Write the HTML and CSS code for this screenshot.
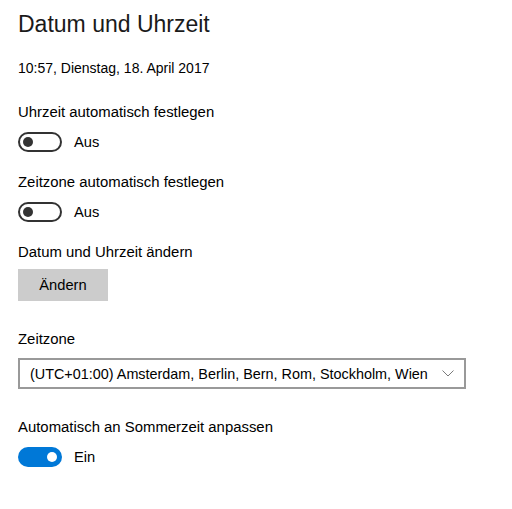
FILE: index.html
```html
<!DOCTYPE html>
<html lang="de">
<head>
<meta charset="utf-8">
<title>Datum und Uhrzeit</title>
<link rel="stylesheet" href="styles.css">
</head>
<body>
<main class="page">
  <h1 class="title">Datum und Uhrzeit</h1>
  <p class="now">10:57, Dienstag, 18. April 2017</p>

  <p class="label l-first">Uhrzeit automatisch festlegen</p>
  <div class="toggle-row">
    <span class="toggle off"><span class="knob"></span></span>
    <span class="state">Aus</span>
  </div>

  <p class="label l-next">Zeitzone automatisch festlegen</p>
  <div class="toggle-row">
    <span class="toggle off"><span class="knob"></span></span>
    <span class="state">Aus</span>
  </div>

  <p class="label l-next">Datum und Uhrzeit ändern</p>
  <button class="btn" type="button">Ändern</button>

  <p class="label l-section">Zeitzone</p>
  <div class="select">
    <span class="select-text">(UTC+01:00) Amsterdam, Berlin, Bern, Rom, Stockholm, Wien</span>
    <svg class="chev" width="12" height="7" viewBox="0 0 12 7"><polyline points="0.5,0.5 6,6 11.5,0.5" fill="none" stroke="#7a7a7a" stroke-width="1"/></svg>
  </div>

  <p class="label l-section2">Automatisch an Sommerzeit anpassen</p>
  <div class="toggle-row">
    <span class="toggle on"><span class="knob"></span></span>
    <span class="state">Ein</span>
  </div>
</main>
</body>
</html>
```
FILE: styles.css
```css
html, body {
  margin: 0;
  padding: 0;
  background: #ffffff;
}
body {
  font-family: "Liberation Sans", Arial, sans-serif;
  color: #000000;
}
.page {
  display: flex;
  flex-direction: column;
  align-items: flex-start;
  padding: 8px 0 0 18px;
}
.title {
  margin: 0;
  font-size: 23px;
  font-weight: normal;
  line-height: 32px;
  color: #1a1a1a;
}
.now {
  margin: 18px 0 0;
  font-size: 14px;
  line-height: 20px;
}
.label {
  margin: 0;
  font-size: 14.9px;
  line-height: 20px;
}
.l-first { margin-top: 24px; }
.l-next { margin-top: 20px; }
.l-section { margin-top: 28px; }
.l-section2 { margin-top: 28px; }
.toggle-row {
  display: flex;
  align-items: center;
  gap: 12px;
  margin-top: 10px;
  height: 20px;
}
.state {
  font-size: 14.7px;
  line-height: 20px;
}
.toggle {
  box-sizing: border-box;
  width: 44px;
  height: 20px;
  border-radius: 10px;
  display: flex;
  align-items: center;
  padding: 0 3px;
}
.toggle .knob {
  width: 10px;
  height: 10px;
  border-radius: 50%;
}
.toggle.off {
  border: 2px solid #333333;
  justify-content: flex-start;
}
.toggle.off .knob { background: #333333; }
.toggle.on {
  background: #0078d7;
  justify-content: flex-end;
  padding: 0 5px;
}
.toggle.on .knob { background: #ffffff; }
.btn {
  margin-top: 7px;
  width: 90px;
  height: 32px;
  border: 0;
  background: #cccccc;
  font-family: inherit;
  font-size: 14.7px;
  color: #000;
  padding: 0;
}
.select {
  box-sizing: border-box;
  margin-top: 9px;
  width: 448px;
  height: 31px;
  border: 2px solid #999999;
  display: flex;
  align-items: center;
  justify-content: space-between;
  padding: 0 10px 0 10px;
}
.select-text {
  font-size: 14.4px;
  line-height: 20px;
  white-space: nowrap;
}
.chev { display: block; }
```
